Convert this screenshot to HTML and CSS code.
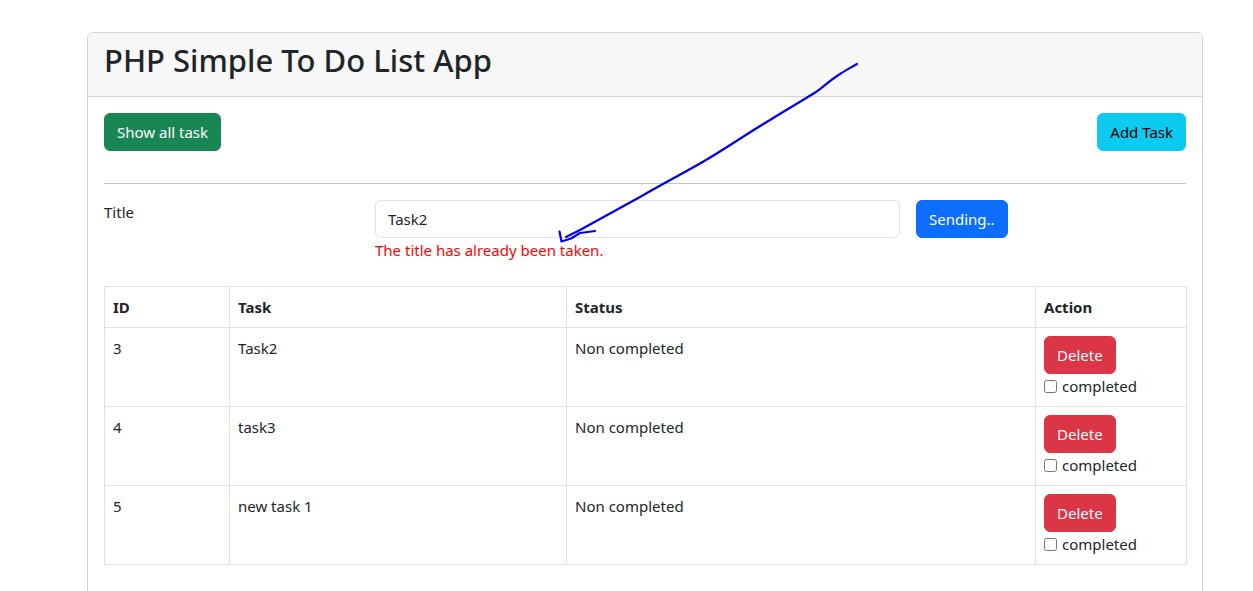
FILE: index.html
```html
<!DOCTYPE html>
<html lang="en">
<head>
<meta charset="utf-8">
<title>PHP Simple To Do List App</title>
<link rel="stylesheet" href="styles.css">
</head>
<body>
<div class="card">
  <div class="card-header">
    <h2 class="title">PHP Simple To Do List App</h2>
  </div>
  <div class="card-body">
    <div class="toolbar">
      <button class="btn btn-success">Show all task</button>
      <button class="btn btn-info">Add Task</button>
    </div>
    <hr class="divider">
    <form class="task-form">
      <label class="form-label">Title</label>
      <div class="field">
        <input class="form-control" type="text" value="Task2">
        <div class="error">The title has already been taken.</div>
      </div>
      <div class="submit-wrap">
        <button type="button" class="btn btn-primary">Sending..</button>
      </div>
    </form>
    <table class="tasks">
      <colgroup>
        <col class="c-id">
        <col class="c-task">
        <col class="c-status">
        <col class="c-action">
      </colgroup>
      <thead>
        <tr><th>ID</th><th>Task</th><th>Status</th><th>Action</th></tr>
      </thead>
      <tbody>
        <tr>
          <td>3</td><td>Task2</td><td>Non completed</td>
          <td><button class="btn btn-danger">Delete</button><label class="check"><input type="checkbox"> completed</label></td>
        </tr>
        <tr>
          <td>4</td><td>task3</td><td>Non completed</td>
          <td><button class="btn btn-danger">Delete</button><label class="check"><input type="checkbox"> completed</label></td>
        </tr>
        <tr>
          <td>5</td><td>new task 1</td><td>Non completed</td>
          <td><button class="btn btn-danger">Delete</button><label class="check"><input type="checkbox"> completed</label></td>
        </tr>
      </tbody>
    </table>
  </div>
</div>
<svg class="annotation" width="1253" height="591" viewBox="0 0 1253 591" aria-hidden="true">
  <path d="M857 64 C 850 68, 846 70, 840 74 C 832 79, 824 86, 816 92 C 800 102, 786 110, 770 120 C 748 133, 728 147, 706 160 C 684 173, 662 184, 640 197 C 620 208, 600 219, 580 230 C 574 233, 570 235, 566 237 M559.5 231.5 L561.5 241.5 L571 238.5 L580 233 L595 231" fill="none" stroke="#0000f0" stroke-width="2.2" stroke-linecap="round" stroke-linejoin="round"/>
</svg>
</body>
</html>
```
FILE: styles.css
```css
* { box-sizing: border-box; }
html, body {
  margin: 0;
  padding: 0;
  background: #fff;
}
body {
  font-family: "Noto Sans", "Open Sans", sans-serif;
  font-size: 15px;
  line-height: 24px;
  color: #212529;
  position: relative;
  height: 591px;
  overflow: hidden;
}
.card {
  margin: 32px 0 0 87px;
  width: 1116px;
  height: 580px;
  border: 1px solid #d5d5d5;
  border-radius: 6px;
}
.card-header {
  background: #f7f7f7;
  border-bottom: 1px solid #d5d5d5;
  padding: 8px 16px;
  border-radius: 5px 5px 0 0;
}
.title {
  margin: 0 0 8px;
  font-size: 31px;
  line-height: 39px;
  font-weight: 500;
}
.card-body {
  padding: 16px;
  display: flex;
  flex-direction: column;
}
.toolbar {
  display: flex;
  justify-content: space-between;
  margin-bottom: 16px;
}
.btn {
  font-family: inherit;
  font-size: 15px;
  line-height: 24px;
  padding: 6px 12px;
  border: 1px solid transparent;
  border-radius: 6px;
  cursor: pointer;
  display: inline-block;
}
.btn-success { background: #198754; border-color: #198754; color: #fff; }
.btn-info { background: #0dcaf0; border-color: #0dcaf0; color: #000; }
.btn-primary { background: #0d6efd; border-color: #0d6efd; color: #fff; }
.btn-danger { background: #dc3545; border-color: #dc3545; color: #fff; }
.divider {
  margin: 16px 0;
  border: 0;
  border-top: 1px solid #c4c4c4;
  height: 0;
  width: 100%;
}
.task-form {
  display: grid;
  grid-template-columns: 255px 525px auto;
  column-gap: 16px;
  align-items: start;
  margin: 0 0 24px;
}
.form-label { display: block; }
.form-control {
  display: block;
  width: 100%;
  font-family: inherit;
  font-size: 15px;
  line-height: 24px;
  padding: 6px 12px;
  color: #212529;
  border: 1px solid #dee2e6;
  border-radius: 6px;
  background: #fff;
}
.error {
  color: #ff0000;
}
.tasks {
  width: 1082px;
  border-collapse: collapse;
  table-layout: fixed;
}
.c-id { width: 125px; }
.c-task { width: 337px; }
.c-status { width: 469px; }
.c-action { width: 151px; }
.tasks th, .tasks td {
  border: 1px solid #dee2e6;
  padding: 8px;
  text-align: left;
  vertical-align: top;
}
.tasks th { font-weight: 700; }
.check {
  display: flex;
  align-items: center;
}
.check input {
  margin: 0 5px 0 0;
  width: 13px;
  height: 13px;
}
.annotation {
  position: absolute;
  top: 0;
  left: 0;
  pointer-events: none;
}
```
